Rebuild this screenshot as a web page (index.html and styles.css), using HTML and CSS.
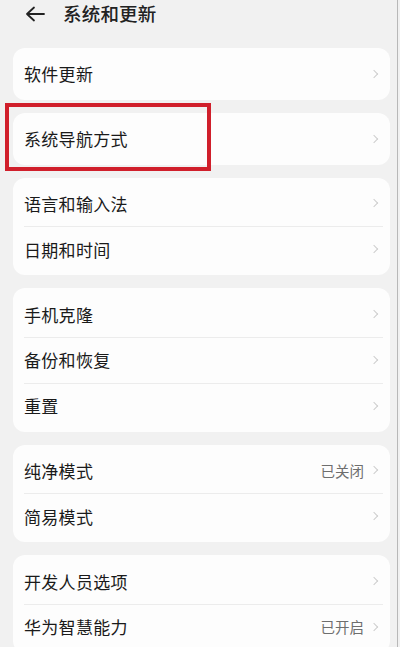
FILE: index.html
```html
<!DOCTYPE html>
<html lang="zh-CN">
<head>
<meta charset="utf-8">
<title>系统和更新</title>
<link rel="stylesheet" href="styles.css">
</head>
<body>
<div class="screen">
  <header class="topbar">
    <svg class="back" width="20" height="16" viewBox="0 0 20 16"><path d="M9 1.5 L2 8 L9 14.5 M2 8 H19" fill="none" stroke="#222" stroke-width="1.8" stroke-linecap="round" stroke-linejoin="round"/></svg>
    <h1 class="title">系统和更新</h1>
  </header>

  <section class="card">
    <div class="row"><span class="label">软件更新</span><span class="chev"></span></div>
  </section>

  <section class="card">
    <div class="row"><span class="label">系统导航方式</span><span class="chev"></span></div>
  </section>

  <section class="card">
    <div class="row"><span class="label">语言和输入法</span><span class="chev"></span></div>
    <div class="row"><span class="label">日期和时间</span><span class="chev"></span></div>
  </section>

  <section class="card">
    <div class="row"><span class="label">手机克隆</span><span class="chev"></span></div>
    <div class="row"><span class="label">备份和恢复</span><span class="chev"></span></div>
    <div class="row"><span class="label">重置</span><span class="chev"></span></div>
  </section>

  <section class="card">
    <div class="row"><span class="label">纯净模式</span><span class="value">已关闭</span><span class="chev"></span></div>
    <div class="row"><span class="label">简易模式</span><span class="chev"></span></div>
  </section>

  <section class="card">
    <div class="row"><span class="label">开发人员选项</span><span class="chev"></span></div>
    <div class="row"><span class="label">华为智慧能力</span><span class="value">已开启</span><span class="chev"></span></div>
  </section>

  <div class="highlight"></div>
  <div class="edge"></div>
</div>
</body>
</html>
```

FILE: styles.css
```css
* { box-sizing: border-box; }
html, body {
  margin: 0;
  padding: 0;
  background: #f1f1f1;
}
body {
  font-family: "Noto Sans CJK SC", "Noto Sans", sans-serif;
  color: #1e1e1e;
  overflow: hidden;
}
.screen {
  position: relative;
  width: 400px;
  height: 647px;
  padding: 0 10px 0 13px;
  display: flex;
  flex-direction: column;
  gap: 13px;
}
.topbar {
  height: 37px;
  display: flex;
  align-items: center;
  padding-left: 12px;
  padding-bottom: 9px;
}
.back {
  display: block;
  flex: none;
  margin-top: 2px;
}
.title {
  margin: 0 0 0 18px;
  font-size: 18.5px;
  font-weight: 500;
  color: #222;
  letter-spacing: 0.2px;
}
.card {
  background: #fdfdfd;
  border-radius: 12px;
  padding: 3px 0;
  flex: none;
}
.row {
  height: 45.8px;
  display: flex;
  align-items: center;
  padding: 0 10px 0 11px;
  position: relative;
}
.row + .row::before {
  content: "";
  position: absolute;
  left: 11px;
  right: 7px;
  top: 0;
  height: 1px;
  background: #ececec;
}
.label {
  flex: 1;
  font-size: 17px;
  line-height: 1;
  color: #1a1a1a;
  letter-spacing: 0.3px;
}
.value {
  font-size: 14.5px;
  color: #6e6e6e;
  margin-right: 7px;
}
.chev {
  width: 6px;
  height: 6px;
  border-top: 1.4px solid #cdcdcd;
  border-right: 1.4px solid #cdcdcd;
  transform: rotate(45deg);
  margin-right: 3px;
}
.highlight {
  position: absolute;
  left: 5px;
  top: 103px;
  width: 206px;
  height: 68px;
  border: 4px solid #d01f2b;
}
.edge {
  position: absolute;
  top: 0;
  bottom: 0;
  left: 397px;
  width: 1px;
  background: #b8b8b8;
}
```
